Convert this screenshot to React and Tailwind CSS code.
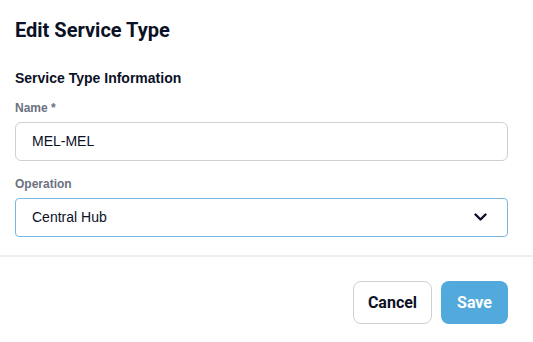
import React from "react";

const arial = { fontFamily: "'Liberation Sans', Arial, sans-serif" };

export default function App() {
  return (
    <div className="w-[533px] h-[342px] bg-white overflow-hidden" style={arial}>
      <div className="pl-[15px] pr-[25px] pt-[17px]">
        <h1 className="text-[20px] leading-[26px] font-bold text-[#0b1126]" style={{ fontFamily: "Roboto, 'Liberation Sans', sans-serif" }}>Edit Service Type</h1>
        <h2 className="mt-[25px] text-[14px] leading-[20px] font-bold text-[#0b1126]">Service Type Information</h2>
        <label className="block mt-[12px] text-[12px] leading-[16px] font-bold text-[#6b7280]">Name *</label>
        <div className="mt-[6px] h-[39px] border border-[#cfcfcf] rounded-[6px] flex items-center px-[16px] text-[14px] text-[#0b1126]">MEL-MEL</div>
        <label className="block mt-[15px] text-[12px] leading-[16px] font-bold text-[#6b7280]">Operation</label>
        <div className="mt-[6px] h-[39px] border border-[#7ab8e4] rounded-[4px] flex items-center justify-between pl-[16px] pr-[20px] text-[14px] text-[#0b1126]">
          <span>Central Hub</span>
          <svg width="13" height="9" viewBox="0 0 13 9" fill="none">
            <path d="M1.5 1.5 L6.5 6.5 L11.5 1.5" stroke="#0b1126" strokeWidth="2.4" strokeLinecap="round" strokeLinejoin="round" />
          </svg>
        </div>
      </div>
      <div className="mt-[18px] h-[2px] bg-[#efefef]" />
      <div className="flex justify-end gap-[9px] pr-[25px] pt-[24px]">
        <button className="w-[79px] h-[43px] border border-[#cfcfcf] rounded-[8px] bg-white text-[16px] font-bold text-[#0b1126]" style={{ fontFamily: "Roboto, sans-serif" }}>Cancel</button>
        <button className="w-[67px] h-[43px] rounded-[8px] bg-[#52a9dc] text-[16px] font-bold text-white" style={{ fontFamily: "Roboto, sans-serif" }}>Save</button>
      </div>
    </div>
  );
}
